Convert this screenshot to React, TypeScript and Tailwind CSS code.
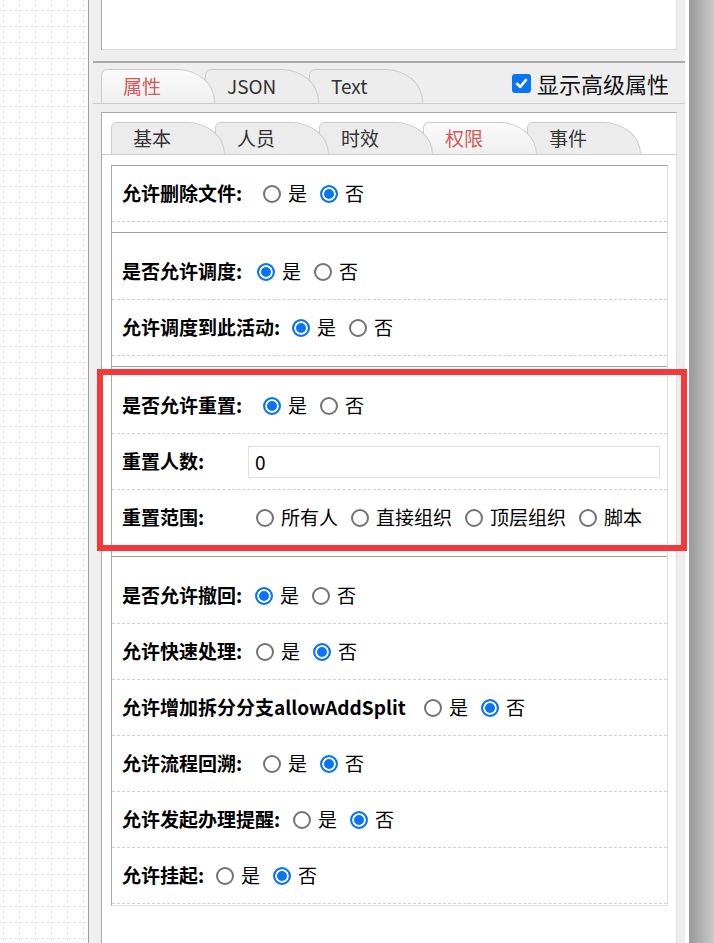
import React from "react";

type Opt = { name: string; options: string[]; checked: number };

function Radios({ name, options, checked }: Opt) {
  return (
    <div className="flex items-center gap-[13px]">
      {options.map((o, i) => (
        <label key={o} className="flex items-center">
          <input
            type="radio"
            name={name}
            defaultChecked={i === checked}
            className="m-0 h-[18px] w-[18px] shrink-0 appearance-none rounded-full border-[2px] border-[#737373] bg-white checked:border-[#0a74f5] checked:bg-[#0a74f5] checked:shadow-[inset_0_0_0_2px_white]"
          />
          <span className="ml-[7px]">{o}</span>
        </label>
      ))}
    </div>
  );
}

function Row({ label, w, children }: { label: string; w: string; children: React.ReactNode }) {
  return (
    <div className="flex h-[56px] items-center border-b border-dashed border-[#cfcfcf] pl-[10px]">
      <span className={`shrink-0 font-bold ${w}`}>{label}</span>
      {children}
    </div>
  );
}

function Tab({ text, active, z }: { text: string; active?: boolean; z: string }) {
  return (
    <div
      className={`relative -ml-[10px] flex h-full w-[114px] items-center rounded-tl-[6px] rounded-tr-[38px_32px] border border-b-0 border-[#cccccc] pl-[21px] first:ml-0 ${z} ${
        active ? "bg-[linear-gradient(#fbfbfb,#efefef)] text-[#d25a5a]" : "bg-[#ececec] text-[#333]"
      }`}
    >
      {text}
    </div>
  );
}

function Canvas() {
  return (
    <svg width="88" height="943" className="block">
      <defs>
        <pattern id="grid" width="16" height="16" patternUnits="userSpaceOnUse">
          <line x1="3.5" y1="0" x2="3.5" y2="16" stroke="#dedede" strokeDasharray="2 3" />
          <line x1="0" y1="10.5" x2="16" y2="10.5" stroke="#dedede" strokeDasharray="2 3" />
        </pattern>
      </defs>
      <rect width="88" height="943" fill="url(#grid)" />
    </svg>
  );
}

export default function App() {
  return (
    <div className="relative flex h-[943px] w-[714px] overflow-hidden bg-white font-['Noto_Sans_CJK_SC','Noto_Sans',sans-serif] text-[19px] text-black">
      <div className="w-[88px] shrink-0">
        <Canvas />
      </div>
      <div className="w-px shrink-0 bg-[#9e9e9e]" />
      <div className="flex w-[596px] shrink-0 bg-[#f0f0f0] pl-[4px]">
        <div className="flex w-[592px] flex-col bg-[#eeeeee]">
          <div className="mx-[8px] h-[50px] shrink-0 border-x border-b border-[#dddddd] border-l-[#aaaaaa] bg-white" />
          <div className="mt-[11px] h-[2px] shrink-0 bg-[#a9a9a9]" />
          <div className="flex h-[41px] shrink-0 items-end border-b border-[#cccccc] px-[8px]">
            <div className="flex h-[34px]">
              <Tab text="属性" active z="z-30" />
              <Tab text="JSON" z="z-20" />
              <Tab text="Text" z="z-10" />
            </div>
            <label className="ml-auto mb-[3px] mr-[8px] flex items-center text-[22px] text-[#111]">
              <span className="flex h-[19px] w-[19px] items-center justify-center rounded-[3px] bg-[#0a74f5]">
                <svg width="13" height="13" viewBox="0 0 13 13" fill="none">
                  <path d="M2 6.8 L5.2 9.8 L11 3" stroke="white" strokeWidth="2.6" strokeLinecap="round" strokeLinejoin="round" />
                </svg>
              </span>
              <span className="ml-[6px]">显示高级属性</span>
            </label>
          </div>
          <div className="mx-[8px] mt-[8px] flex flex-1 flex-col border-x border-t border-[#dddddd] border-l-[#aaaaaa] border-t-[#aaaaaa] bg-white">
            <div className="mt-[9px] flex h-[33px] shrink-0 border-b border-[#cccccc] pl-[9px]">
              <div className="flex h-[32px]">
                <Tab text="基本" z="z-50" />
                <Tab text="人员" z="z-40" />
                <Tab text="时效" z="z-30" />
                <Tab text="权限" active z="z-20" />
                <Tab text="事件" z="z-10" />
              </div>
            </div>
            <div className="ml-[9px] mr-[8px] mt-[10px] border border-[#dddddd] border-l-[#a8a8a8] border-t-[#a0a0a0] pb-[1px]">
              <div className="mb-[10px]">
                <Row label="允许删除文件:" w="w-[141px]">
                  <Radios name="del" options={["是", "否"]} checked={1} />
                </Row>
              </div>
              <div className="mb-[10px] border-t border-[#a0a0a0] pt-[11px]">
                <Row label="是否允许调度:" w="w-[135px]">
                  <Radios name="dd" options={["是", "否"]} checked={0} />
                </Row>
                <Row label="允许调度到此活动:" w="w-[170px]">
                  <Radios name="ddh" options={["是", "否"]} checked={0} />
                </Row>
              </div>
              <div className="mb-[10px] border-t border-[#a0a0a0] pt-[11px]">
                <Row label="是否允许重置:" w="w-[141px]">
                  <Radios name="cz" options={["是", "否"]} checked={0} />
                </Row>
                <Row label="重置人数:" w="w-[126px]">
                  <input
                    defaultValue="0"
                    className="h-[32px] w-[412px] border border-[#e0e0e0] px-[6px] text-[19px] outline-none"
                  />
                </Row>
                <Row label="重置范围:" w="w-[134px]">
                  <Radios name="fw" options={["所有人", "直接组织", "顶层组织", "脚本"]} checked={-1} />
                </Row>
              </div>
              <div className="border-t border-[#a0a0a0] pt-[11px]">
                <Row label="是否允许撤回:" w="w-[133px]">
                  <Radios name="ch" options={["是", "否"]} checked={0} />
                </Row>
                <Row label="允许快速处理:" w="w-[134px]">
                  <Radios name="ks" options={["是", "否"]} checked={1} />
                </Row>
                <Row label="允许增加拆分分支allowAddSplit" w="w-[302px]">
                  <Radios name="cf" options={["是", "否"]} checked={1} />
                </Row>
                <Row label="允许流程回溯:" w="w-[141px]">
                  <Radios name="hs" options={["是", "否"]} checked={1} />
                </Row>
                <Row label="允许发起办理提醒:" w="w-[171px]">
                  <Radios name="tx" options={["是", "否"]} checked={1} />
                </Row>
                <Row label="允许挂起:" w="w-[94px]">
                  <Radios name="gq" options={["是", "否"]} checked={1} />
                </Row>
              </div>
            </div>
          </div>
        </div>
      </div>
      <div className="w-[4px] shrink-0 bg-white" />
      <div className="w-[25px] shrink-0 bg-[linear-gradient(to_right,#999999,#cacaca)]" />
      <div className="absolute left-[97px] top-[369px] h-[182px] w-[590px] border-[6px] border-[#f4393b]" />
    </div>
  );
}
